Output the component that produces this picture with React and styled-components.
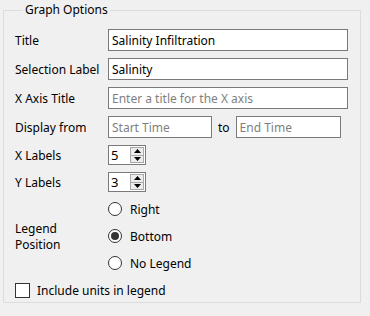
import React from "react";
import styled, { createGlobalStyle } from "styled-components";

const Global = createGlobalStyle`
  html, body { margin: 0; padding: 0; background: #f0f0f0; }
  body { font-family: "Noto Sans", "Segoe UI", sans-serif; font-size: 12px; color: #000; }
`;

const Page = styled.div`
  width: 370px;
  height: 316px;
  box-sizing: border-box;
  padding: 2px 9px 0 3px;
`;

const Group = styled.fieldset`
  margin: 0;
  padding: 11px 11px 8px 11px;
  border: 1px solid #dcdcdc;
  height: 301px;
  box-sizing: border-box;
  min-width: 0;
`;

const Legend = styled.legend`
  margin-left: 8px;
  padding: 0 2px;
  line-height: 16px;
  font-size: 12px;
`;

const Rows = styled.div`
  display: flex;
  flex-direction: column;
  gap: 7px;
`;

const Row = styled.div`
  display: grid;
  grid-template-columns: 93px 1fr;
  align-items: center;
`;

const Label = styled.label`
  line-height: ${(p) => (p.$wrap ? "16px" : "15px")};
  margin-top: ${(p) => (p.$wrap ? "2px" : "0")};
  white-space: ${(p) => (p.$wrap ? "normal" : "nowrap")};
`;

const TextInput = styled.input`
  box-sizing: border-box;
  height: 22px;
  width: ${(p) => p.$w || "240px"};
  margin: 0;
  padding: 0 3px;
  border: 1px solid #7a7a7a;
  background: #fff;
  font-family: inherit;
  font-size: 12px;
  color: #000;
  outline: none;
  &::placeholder { color: #7f7f7f; }
`;

const Inline = styled.div`
  display: flex;
  align-items: center;
`;

const To = styled.span`
  margin: 0 6px 0 6px;
`;

const Spin = styled.div`
  box-sizing: border-box;
  width: 38px;
  height: 20px;
  border: 1px solid #7a7a7a;
  background: #fff;
  display: flex;
  align-items: stretch;
`;

const SpinValue = styled.span`
  flex: 1;
  padding-left: 2px;
  line-height: 18px;
  font-size: 13px;
`;

const SpinButtons = styled.div`
  width: 14px;
  margin: 1px 1px 1px 0;
  display: flex;
  flex-direction: column;
  border: 1px solid #a9a9a9;
  box-sizing: border-box;
  background: #ececec;
`;

const SpinBtn = styled.div`
  flex: 1;
  display: flex;
  align-items: center;
  justify-content: center;
  & + & { border-top: 1px solid #a9a9a9; }
`;

const Arrow = ({ up }) => (
  <svg width="7" height="4" viewBox="0 0 7 4">
    {up ? <polygon points="0,4 7,4 3.5,0" fill="#000" /> : <polygon points="0,0 7,0 3.5,4" fill="#000" />}
  </svg>
);

const RadioList = styled.div`
  display: flex;
  flex-direction: column;
  gap: 7px;
`;

const RadioItem = styled.div`
  height: 20px;
  display: flex;
  align-items: center;
  gap: 8px;
`;

const RadioCircle = styled.span`
  box-sizing: border-box;
  width: 14px;
  height: 14px;
  border-radius: 50%;
  border: 1px solid #333;
  background: #fff;
  display: flex;
  align-items: center;
  justify-content: center;
  &::after {
    content: "";
    width: 8px;
    height: 8px;
    border-radius: 50%;
    background: ${(p) => (p.$checked ? "#333" : "transparent")};
  }
`;

const CheckRow = styled.div`
  height: 20px;
  display: flex;
  align-items: center;
  gap: 7px;
`;

const CheckBox = styled.span`
  box-sizing: border-box;
  width: 15px;
  height: 15px;
  border: 1px solid #333;
  background: #fff;
`;

const SpinBox = ({ value }) => (
  <Spin>
    <SpinValue>{value}</SpinValue>
    <SpinButtons>
      <SpinBtn><Arrow up /></SpinBtn>
      <SpinBtn><Arrow /></SpinBtn>
    </SpinButtons>
  </Spin>
);

export default function App() {
  return (
    <Page>
      <Global />
      <Group>
        <Legend>Graph Options</Legend>
        <Rows>
          <Row>
            <Label>Title</Label>
            <TextInput defaultValue="Salinity Infiltration" />
          </Row>
          <Row>
            <Label>Selection Label</Label>
            <TextInput defaultValue="Salinity" />
          </Row>
          <Row>
            <Label>X Axis Title</Label>
            <TextInput placeholder="Enter a title for the X axis" />
          </Row>
          <Row>
            <Label>Display from</Label>
            <Inline>
              <TextInput $w="104px" placeholder="Start Time" />
              <To>to</To>
              <TextInput $w="105px" placeholder="End Time" />
            </Inline>
          </Row>
          <Row>
            <Label>X Labels</Label>
            <SpinBox value="5" />
          </Row>
          <Row>
            <Label>Y Labels</Label>
            <SpinBox value="3" />
          </Row>
          <Row>
            <Label $wrap>Legend<br />Position</Label>
            <RadioList>
              <RadioItem><RadioCircle />Right</RadioItem>
              <RadioItem><RadioCircle $checked />Bottom</RadioItem>
              <RadioItem><RadioCircle />No Legend</RadioItem>
            </RadioList>
          </Row>
          <CheckRow>
            <CheckBox />
            Include units in legend
          </CheckRow>
        </Rows>
      </Group>
    </Page>
  );
}
